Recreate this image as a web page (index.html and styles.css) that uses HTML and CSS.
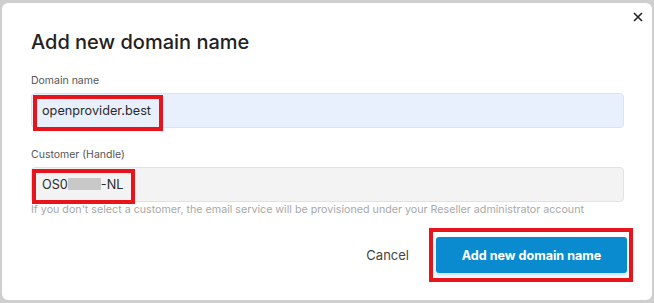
FILE: index.html
```html
<!DOCTYPE html>
<html lang="en">
<head>
  <meta charset="UTF-8">
  <meta name="viewport" content="width=device-width, initial-scale=1.0">
  <title>Add new domain name</title>
  <link rel="stylesheet" href="styles.css">
</head>
<body>
  <div class="modal">
    <button class="close" type="button" aria-label="Close">
      <svg width="10" height="10" viewBox="0 0 10 10">
        <path d="M1 1 L9 9 M9 1 L1 9" stroke="#222" stroke-width="1.6" fill="none"/>
      </svg>
    </button>

    <h2>Add new domain name</h2>

    <div class="form-group">
      <label>Domain name</label>
      <div class="field autofill">
        <span>openprovider.best</span>
        <div class="mark mark-domain"></div>
      </div>
    </div>

    <div class="form-group">
      <label>Customer (Handle)</label>
      <div class="field">
        <span>OS0<span class="redacted"></span>-NL</span>
        <div class="mark mark-handle"></div>
      </div>
      <p class="hint">If you don't select a customer, the email service will be provisioned under your Reseller administrator account</p>
    </div>

    <div class="actions">
      <button class="cancel" type="button">Cancel</button>
      <div class="submit-wrap">
        <button class="submit" type="button">Add new domain name</button>
        <div class="mark mark-submit"></div>
      </div>
    </div>
  </div>
</body>
</html>
```

FILE: styles.css
```css
body {
  margin: 0;
  padding: 3px 2px 3px 2px;
  background-color: #cfcfcf;
  font-family: Inter, "Noto Sans", sans-serif;
}
.modal {
  position: relative;
  box-sizing: border-box;
  width: 650px;
  height: 297px;
  background-color: white;
  border-radius: 6px;
  padding: 27px 28px 0 29px;
}
.close {
  position: absolute;
  top: 8px;
  right: 8px;
  width: 12px;
  height: 12px;
  padding: 0;
  border: none;
  background: none;
  display: flex;
  align-items: center;
  justify-content: center;
}
h2 {
  margin: 0 0 20px;
  font-size: 20px;
  line-height: 24px;
  font-weight: 500;
  color: #222;
}
.form-group {
  margin-bottom: 20px;
}
label {
  display: block;
  font-size: 10.5px;
  line-height: 14px;
  color: #555;
  margin-bottom: 5px;
}
.field {
  position: relative;
  box-sizing: border-box;
  height: 35px;
  border: 1px solid #e2e2e2;
  border-radius: 4px;
  background-color: #f3f3f3;
  padding: 0 10px;
  display: flex;
  align-items: center;
  font-size: 12.7px;
  color: #2a2a2a;
}
.field.autofill {
  background-color: #e8f0fe;
  border-color: #dce3ee;
}
.redacted {
  display: inline-block;
  width: 33px;
  height: 12px;
  background-color: #c8c8c8;
  vertical-align: -1px;
}
.mark {
  position: absolute;
  border: 4px solid #e8141c;
  pointer-events: none;
}
.mark-domain {
  left: 1px;
  top: 1px;
  width: 122px;
  height: 28px;
}
.mark-handle {
  left: 0;
  top: 1px;
  width: 95px;
  height: 27px;
}
.hint {
  margin: 1px 0 0;
  font-size: 10.7px;
  line-height: 14px;
  color: #a8a8a8;
}
.actions {
  display: flex;
  justify-content: flex-end;
  align-items: center;
  margin-top: 19px;
  margin-right: -3px;
  gap: 27px;
}
.cancel {
  border: none;
  background: none;
  padding: 0;
  font-family: inherit;
  font-size: 13px;
  color: #444;
  cursor: pointer;
}
.submit-wrap {
  position: relative;
  display: flex;
}
.submit {
  width: 191px;
  height: 36px;
  background-color: #0a8bd0;
  color: white;
  border: none;
  border-radius: 3px;
  font-family: inherit;
  font-size: 12.6px;
  font-weight: 700;
  box-shadow: 0 2px 4px rgba(10, 100, 160, 0.25);
  cursor: pointer;
}
.mark-submit {
  left: -7px;
  top: -9px;
  width: 196px;
  height: 46px;
}
```
